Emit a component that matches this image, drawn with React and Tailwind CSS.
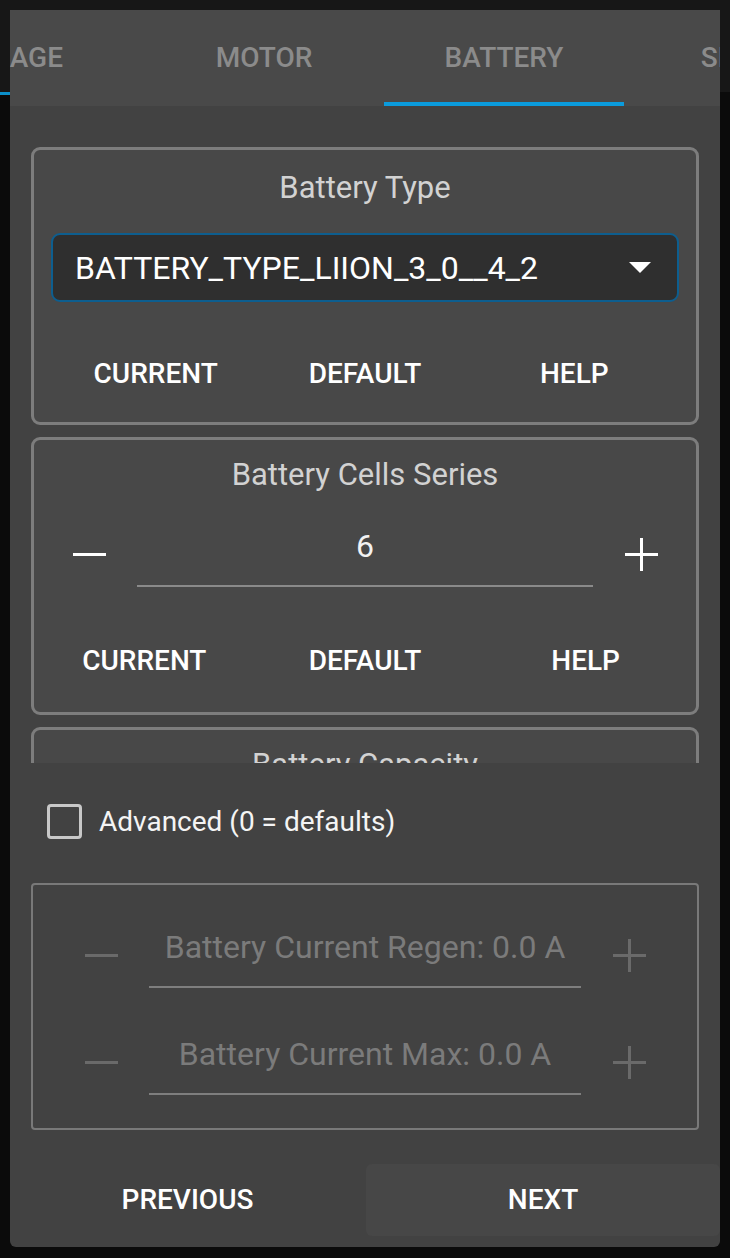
const TABS = ["USAGE", "MOTOR", "BATTERY", "SETUP"];
const ACTIVE_TAB = "BATTERY";

function MinusIcon({ color }) {
  return (
    <svg width="33" height="33" viewBox="0 0 33 33">
      <path d="M0 16.5h33" stroke={color} strokeWidth="3" />
    </svg>
  );
}

function PlusIcon({ color }) {
  return (
    <svg width="33" height="33" viewBox="0 0 33 33">
      <path d="M0 16.5h33M16.5 0v33" stroke={color} strokeWidth="3" />
    </svg>
  );
}

function ActionRow({ className = "" }) {
  return (
    <div className={`grid grid-cols-3 ${className}`}>
      {["CURRENT", "DEFAULT", "HELP"].map((label) => (
        <button
          key={label}
          type="button"
          className="flex h-[32px] items-center justify-center text-[28px] font-medium leading-[32px] text-white"
        >
          {label}
        </button>
      ))}
    </div>
  );
}

function Stepper({ value, disabled = false }) {
  const iconColor = disabled ? "#6a6a6a" : "#ffffff";
  const textColor = disabled ? "text-[#7b7b7b]" : "text-[#f2f2f2]";
  const lineColor = disabled ? "border-[#7e7e7e]" : "border-[#8a8a8a]";

  return (
    <div className="flex items-center gap-[16px]">
      <button type="button" className="flex w-[64px] shrink-0 items-center justify-center">
        <MinusIcon color={iconColor} />
      </button>
      <div className={`flex h-[66px] flex-1 flex-col items-center border-b-2 pt-[7px] ${lineColor}`}>
        <span className={`whitespace-nowrap text-[32px] leading-[36px] ${textColor}`}>{value}</span>
      </div>
      <button type="button" className="flex w-[64px] shrink-0 items-center justify-center">
        <PlusIcon color={iconColor} />
      </button>
    </div>
  );
}

function Card({ title, children, className = "" }) {
  return (
    <div className={`shrink-0 rounded-[9px] border-[3px] border-[#7d7d7d] bg-[#484848] ${className}`}>
      <div className="text-center text-[31px] leading-[36px] text-[#d2d2d2]">{title}</div>
      {children}
    </div>
  );
}

export default function App() {
  return (
    <div className="relative h-[1258px] w-[730px] overflow-hidden bg-[#0b0b0b] font-['Roboto',sans-serif]">
      {/* page behind the dialog */}
      <div className="h-[92px] bg-[#171717]" />
      <div className="h-[3px] w-[180px] bg-[#0b8fc9]" />

      <div className="absolute left-[10px] top-[10px] flex h-[1237px] w-[710px] flex-col overflow-hidden rounded-b-[6px] bg-[#424242]">
        {/* tabs */}
        <div className="flex h-[96px] shrink-0 overflow-hidden bg-[#494949]">
          <div className="-ml-[106px] flex">
            {TABS.map((tab, i) => (
              <div
                key={tab}
                className={`relative flex h-[96px] w-[240px] shrink-0 items-center ${
                  i === 0 ? "justify-end pr-[81px]" : "justify-center"
                }`}
              >
                <span className="text-[28px] font-medium leading-[32px] text-[#8b8b8b]">{tab}</span>
                {tab === ACTIVE_TAB ? (
                  <div className="absolute bottom-0 left-0 h-[4px] w-full bg-[#0b9bdc]" />
                ) : null}
              </div>
            ))}
          </div>
        </div>

        {/* scrolling settings */}
        <div className="flex h-[657px] shrink-0 flex-col gap-[12px] overflow-hidden px-[21px] pt-[41px]">
          <Card title="Battery Type" className="h-[278px] pt-[20px]">
            <div className="mx-[17px] mt-[27px] flex h-[69px] items-center justify-between rounded-[9px] border-2 border-[#0d5e8f] bg-[#2f2f2f] pl-[22px] pr-[26px]">
              <span className="text-[32px] leading-[36px] text-white">BATTERY_TYPE_LIION_3_0__4_2</span>
              <svg width="22" height="11" viewBox="0 0 22 11">
                <path d="M0 0h22L11 11z" fill="#ffffff" />
              </svg>
            </div>
            <ActionRow className="mx-[17px] mt-[56px]" />
          </Card>

          <Card title="Battery Cells Series" className="h-[278px] pt-[17px]">
            <div className="mt-[28px] px-[23px]">
              <Stepper value="6" />
            </div>
            <ActionRow className="mt-[58px]" />
          </Card>

          <Card title="Battery Capacity" className="h-[278px] pt-[17px]" />
        </div>

        {/* advanced */}
        <div className="flex flex-1 flex-col px-[21px]">
          <label className="ml-[16px] mt-[41px] flex items-center gap-[17px]">
            <span className="h-[35px] w-[35px] rounded-[4px] border-[3px] border-[#c8c8c8]" />
            <span className="text-[28px] leading-[34px] text-[#f4f4f4]">Advanced (0 = defaults)</span>
          </label>

          <div className="mt-[44px] flex h-[247px] flex-col gap-[41px] rounded-[4px] border-2 border-[#797979] px-[36px] pt-[37px]">
            <Stepper value="Battery Current Regen: 0.0 A" disabled />
            <Stepper value="Battery Current Max: 0.0 A" disabled />
          </div>
        </div>

        {/* navigation */}
        <div className="mb-[11px] grid h-[72px] shrink-0 grid-cols-2">
          <button type="button" className="text-[28px] font-medium text-white">
            PREVIOUS
          </button>
          <button type="button" className="ml-[1px] rounded-[6px] bg-[#474747] text-[28px] font-medium text-white">
            NEXT
          </button>
        </div>
      </div>
    </div>
  );
}
